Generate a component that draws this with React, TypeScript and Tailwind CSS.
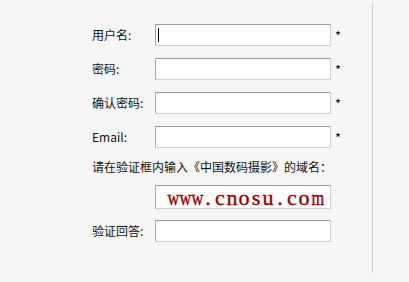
import React from "react";

const Field = ({ caret = false }: { caret?: boolean }) => (
  <div className="relative h-[22px] w-[176px] border border-t-[#9a9a9a] border-l-[#a8a8a8] border-r-[#cfcfcf] border-b-[#cfcfcf] bg-white">
    {caret && <span className="absolute left-[2px] top-[3px] h-[14px] w-px bg-black" />}
  </div>
);

const Row = ({ label, star = true, caret = false, className = "" }: { label: string; star?: boolean; caret?: boolean; className?: string }) => (
  <div className={"flex items-center h-[22px] " + className}>
    <span className="w-[63px] shrink-0">{label}</span>
    <Field caret={caret} />
    {star && <span className="ml-[4px] text-[13px] leading-none">*</span>}
  </div>
);

export default function App() {
  const domain = "www.cnosu.com".split("");
  return (
    <div
      className="w-[409px] h-[282px] bg-[#f6f6f6] text-[12px] text-[#111] overflow-hidden"
      style={{ fontFamily: '"Noto Sans CJK SC", "Liberation Sans", sans-serif' }}
    >
      <div className="mt-[3px] h-[270px] w-[373px] border-r border-[#cccccc] pl-[92px] pt-[21px] flex flex-col">
        <Row label="用户名:" caret />
        <Row label="密码:" className="mt-[12px]" />
        <Row label="确认密码:" className="mt-[12px]" />
        <Row label="Email:" className="mt-[12px]" />
        <p className="mt-[11px] leading-[16px]">请在验证框内输入《中国数码摄影》的域名：</p>
        <div className="mt-[10px] ml-[63px] h-[24px] w-[176px] border border-t-[#9a9a9a] border-l-[#a8a8a8] border-r-[#cfcfcf] border-b-[#cfcfcf] bg-white pl-[10px] flex items-center">
          <span
            className="text-[22px] leading-none text-[#990000] flex pt-[1px] [-webkit-text-stroke:0.4px_#990000]"
            style={{ fontFamily: '"Liberation Serif", serif' }}
          >
            {domain.map((c, i) => (
              <span
                key={i}
                className={
                  c === "w" || c === "m"
                    ? "inline-block w-[12px] text-center scale-x-[0.74]"
                    : "inline-block w-[12px] text-center"
                }
              >
                {c}
              </span>
            ))}
          </span>
        </div>
        <Row label="验证回答:" star={false} className="mt-[11px]" />
      </div>
    </div>
  );
}
